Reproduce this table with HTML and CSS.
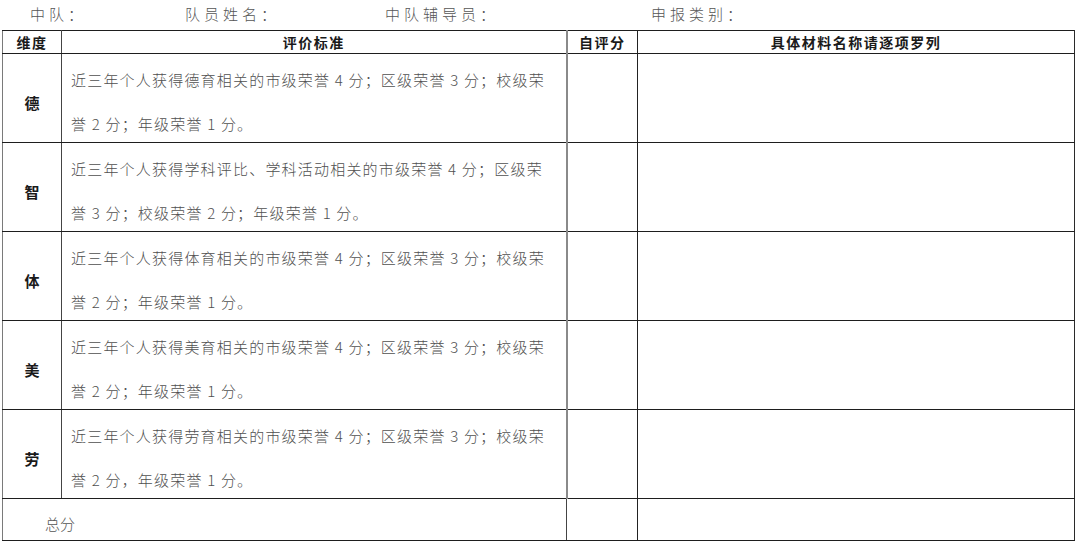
FILE: index.html
```html
<!DOCTYPE html>
<html lang="zh">
<head>
<meta charset="utf-8">
<link rel="stylesheet" href="styles.css">
</head>
<body>
<div class="info">
  <span class="f f1">中队：</span>
  <span class="f f2">队员姓名：</span>
  <span class="f f3">中队辅导员：</span>
  <span class="f f4">申报类别：</span>
</div>
<table class="form">
  <colgroup>
    <col class="c1"><col class="c2"><col class="c3"><col class="c4">
  </colgroup>
  <tr class="head">
    <th class="k1">维度</th>
    <th class="k2">评价标准</th>
    <th class="k3">自评分</th>
    <th class="k4">具体材料名称请逐项罗列</th>
  </tr>
  <tr class="row">
    <td class="k1 dim">德</td>
    <td class="k2 crit"><div class="ln">近三年个人获得德育相关的市级荣誉 4 分；区级荣誉 3 分；校级荣</div><div class="ln">誉 2 分；年级荣誉 1 分。</div></td>
    <td class="k3"></td>
    <td class="k4"></td>
  </tr>
  <tr class="row">
    <td class="k1 dim">智</td>
    <td class="k2 crit"><div class="ln">近三年个人获得学科评比、学科活动相关的市级荣誉 4 分；区级荣</div><div class="ln">誉 3 分；校级荣誉 2 分；年级荣誉 1 分。</div></td>
    <td class="k3"></td>
    <td class="k4"></td>
  </tr>
  <tr class="row r88">
    <td class="k1 dim">体</td>
    <td class="k2 crit"><div class="ln">近三年个人获得体育相关的市级荣誉 4 分；区级荣誉 3 分；校级荣</div><div class="ln">誉 2 分；年级荣誉 1 分。</div></td>
    <td class="k3"></td>
    <td class="k4"></td>
  </tr>
  <tr class="row">
    <td class="k1 dim">美</td>
    <td class="k2 crit"><div class="ln">近三年个人获得美育相关的市级荣誉 4 分；区级荣誉 3 分；校级荣</div><div class="ln">誉 2 分；年级荣誉 1 分。</div></td>
    <td class="k3"></td>
    <td class="k4"></td>
  </tr>
  <tr class="row">
    <td class="k1 dim">劳</td>
    <td class="k2 crit"><div class="ln">近三年个人获得劳育相关的市级荣誉 4 分；区级荣誉 3 分；校级荣</div><div class="ln">誉 2 分，年级荣誉 1 分。</div></td>
    <td class="k3"></td>
    <td class="k4"></td>
  </tr>
  <tr class="total">
    <td class="k1 sum" colspan="2">总分</td>
    <td class="k3"></td>
    <td class="k4"></td>
  </tr>
</table>
</body>
</html>
```
FILE: styles.css
```css
html, body {
  margin: 0;
  padding: 0;
  background: #fff;
}
body {
  font-family: "Noto Sans CJK SC", "Liberation Serif", serif;
  color: #4a4a4a;
  width: 1080px;
  height: 546px;
  overflow: hidden;
}
.info {
  display: flex;
  box-sizing: border-box;
  padding: 3px 0 0 30px;
  height: 30px;
  line-height: 22px;
  font-size: 15px;
  letter-spacing: 4px;
  color: #555;
  font-weight: 300;
}
.f1 { width: 155px; }
.f2 { width: 200px; }
.f3 { width: 266px; }
.form {
  margin-left: 2px;
  border-collapse: collapse;
  table-layout: fixed;
  width: 1073px;
}
.c1 { width: 59px; }
.c2 { width: 505px; }
.c3 { width: 71px; }
.c4 { width: 437px; }
.form th, .form td {
  padding: 0;
  border-top: 1.5px solid #1e1e1e;
  border-bottom: 1.5px solid #1e1e1e;
}
.form .k1 { border-left: 1.5px solid #7a7a7a; border-right: 1.5px solid #444; }
.form .k2 { border-right: 2px solid #8a8a8a; }
.form .k3 { border-right: 1.5px solid #222; }
.form .k4 { border-right: 1.5px solid #2a2a2a; }
.head { height: 23px; }
.head th {
  font-size: 14px;
  font-weight: 700;
  color: #1a1a1a;
  text-align: center;
  line-height: 20px;
  letter-spacing: 1.5px;
}
.row { height: 89px; }
.r88 { height: 88px; }
.form .dim {
  text-align: center;
  font-size: 15px;
  font-weight: 700;
  color: #1a1a1a;
  padding-top: 9px;
  vertical-align: middle;
}
.form .crit {
  vertical-align: top;
  padding-left: 9px;
  font-size: 15px;
  font-weight: 300;
  letter-spacing: 1.2px;
  color: #505050;
}
.crit .ln {
  height: 44px;
  line-height: 44px;
  white-space: nowrap;
  margin-top: 4px;
}
.crit .ln + .ln { margin-top: 0; margin-bottom: -4px; }
.total { height: 42px; }
.form .sum {
  font-size: 15px;
  font-weight: 300;
  color: #555;
  padding-left: 42px;
  padding-top: 7px;
  vertical-align: middle;
}
```
